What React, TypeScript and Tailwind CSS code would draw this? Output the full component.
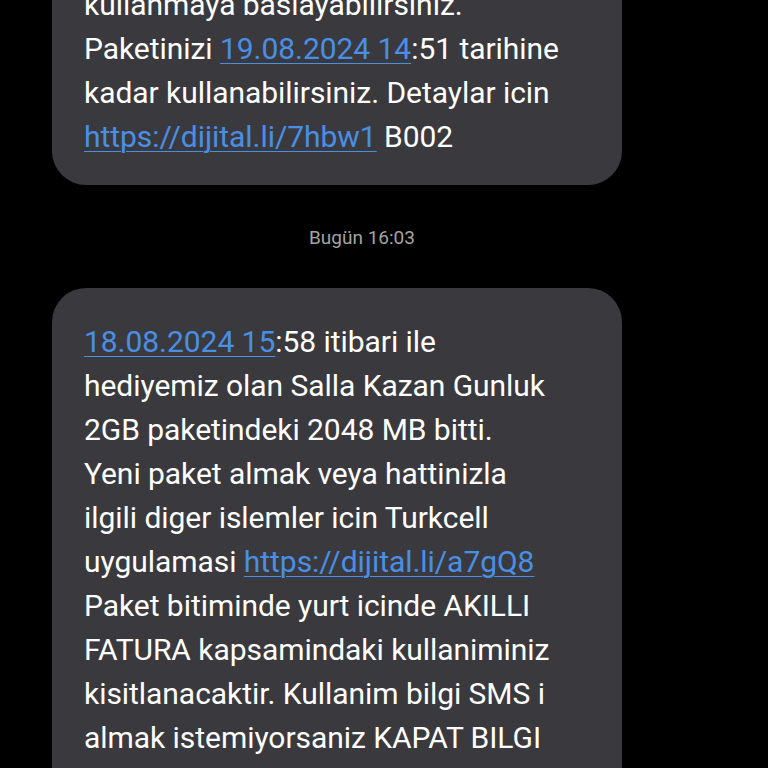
import React from 'react';

const Link: React.FC<{ children: React.ReactNode }> = ({ children }) => (
    <span className="text-[#4a8fe6] underline decoration-1 underline-offset-[4px]">{children}</span>
);

const Bubble: React.FC<{ className?: string; children: React.ReactNode }> = ({ className = '', children }) => (
    <div className={`ml-[52px] w-[570px] bg-[#3a3a3e] rounded-[34px] px-[32px] text-white text-[30px] leading-[44px] tracking-[-0.05px] whitespace-nowrap ${className}`}>
        {children}
    </div>
);

export default function App() {
    return (
        <div className="w-[768px] h-[768px] overflow-hidden bg-black font-['Roboto',sans-serif]">
            <Bubble className="-mt-[49px] pt-[32px] pb-[26px]">
                kullanmaya baslayabilirsiniz.
                <br />
                Paketinizi <Link>19.08.2024 14</Link>:51 tarihine
                <br />
                kadar kullanabilirsiniz. Detaylar icin
                <br />
                <Link>https://dijital.li/7hbw1</Link> B002
            </Bubble>

            <div className="h-[103px] flex items-center justify-center pr-[44px] pt-[4px] text-[19px] text-[#a3a3a3]">
                Bugün 16:03
            </div>

            <Bubble className="pt-[32px] pb-[32px]">
                <Link>18.08.2024 15</Link>:58 itibari ile
                <br />
                hediyemiz olan Salla Kazan Gunluk
                <br />
                2GB paketindeki 2048 MB bitti.
                <br />
                Yeni paket almak veya hattinizla
                <br />
                ilgili diger islemler icin Turkcell
                <br />
                uygulamasi <Link>https://dijital.li/a7gQ8</Link>
                <br />
                Paket bitiminde yurt icinde AKILLI
                <br />
                FATURA kapsamindaki kullaniminiz
                <br />
                kisitlanacaktir. Kullanim bilgi SMS i
                <br />
                almak istemiyorsaniz KAPAT BILGI
                <br />
                yazip 2222 ye gonderebilirsiniz.
            </Bubble>
        </div>
    );
}
